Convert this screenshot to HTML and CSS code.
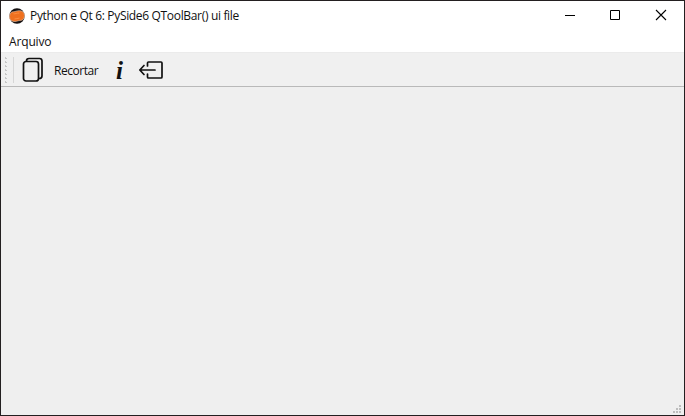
FILE: index.html
```html
<!DOCTYPE html>
<html lang="pt">
<head>
<meta charset="utf-8">
<title>Python e Qt 6: PySide6 QToolBar() ui file</title>
<link rel="stylesheet" href="styles.css">
</head>
<body>
<div class="window">
  <header class="titlebar">
    <svg class="app-icon" width="16" height="16" viewBox="0 0 16 16">
      <circle cx="8" cy="8" r="7.7" fill="#151112"/>
      <path d="M.5 8.800C.5 5.300 2.100 3.700 4.700 3.700c1.700 0 2.600-1 5.500-1 3.200 0 5.300 1.700 5.300 4.700 0 3.500-1.900 5.100-4.600 5.100-1.800 0-2.700 1-4.900 1C2.600 13.500.5 12.100.5 8.800z" fill="#ef701f" stroke="#e8c9b4" stroke-width=".6"/>
      <path d="M4.500 5.800c1.800.3 3.200-.9 5.800-.7M5.500 11c1.800.1 3-.9 5-.9" fill="none" stroke="#ff9448" stroke-width=".8"/>
    </svg>
    <span class="title">Python e Qt 6: PySide6 QToolBar() ui file</span>
    <div class="controls">
      <svg width="45" height="30" viewBox="0 0 45 30"><path d="M18 14.500h10" stroke="#000"/></svg>
      <svg width="45" height="30" viewBox="0 0 45 30"><path d="M18.500 9.500h9v9h-9z" fill="none" stroke="#000"/></svg>
      <svg width="45" height="30" viewBox="0 0 45 30"><path d="M19 9l10 10M29 9l-10 10" stroke="#000" stroke-width="1.100"/></svg>
    </div>
  </header>
  <nav class="menubar"><span class="menu">Arquivo</span></nav>
  <div class="toolbar">
    <svg class="handle" width="13" height="33" viewBox="0 0 13 33">
      <path d="M4.500 4v26" stroke="#c6c6c6" stroke-dasharray="2 2"/>
      <path d="M5.500 5v25" stroke="#c6c6c6" stroke-dasharray="1 3"/>
      <path d="M12.500 4v26" stroke="#d6d6d6"/>
    </svg>
    <svg class="copy" width="22" height="26" viewBox="0 0 22 26" fill="none" stroke="#111" stroke-width="1.700" stroke-linejoin="round">
      <rect x="1.500" y="4.500" width="15" height="19.500" rx="2.500"/>
      <path d="M4.500 4.200V3.900Q4.500 1.500 7 1.500h10.500Q20 1.500 20 4v15Q20 21.500 17 21.500"/>
    </svg>
    <span class="action">Recortar</span>
    <span class="info">i</span>
    <svg class="exit" width="26" height="22" viewBox="0 0 26 22" fill="none" stroke="#111" stroke-width="1.700" stroke-linecap="round" stroke-linejoin="round">
      <path d="M9.500 7V4Q9.500 3 10.500 3h12.500q1 0 1 1v14q0 1-1 1H10.500q-1 0-1-1v-3"/>
      <path d="M17 11H2M6 6.500L1.800 11 6 15.500"/>
    </svg>
  </div>
  <main class="content">
    <svg width="9" height="9" viewBox="0 0 9 9" fill="#bdbdbd"><path d="M6 0h2v2H6zM3 3h2v2H3zM6 3h2v2H6zM0 6h2v2H0zM3 6h2v2H3zM6 6h2v2H6z"/></svg>
  </main>
</div>
</body>
</html>
```
FILE: styles.css
```css
* { box-sizing: border-box; }
body { margin: 0; font: 12px/16px "Open Sans", "Noto Sans", sans-serif; color: #111; }
.window { height: 416px; border: 1px solid #231f20; display: flex; flex-direction: column; background: #efefef; }
.titlebar { height: 30px; background: #fff; display: flex; align-items: center; padding: 0 2px 0 8px; }
.app-icon { margin-right: 5px; }
.title { font-size: 12px; letter-spacing: -0.330px; white-space: nowrap; }
.controls { display: flex; margin-left: auto; }
.controls svg { display: block; }
.menubar { height: 21px; background: #fff; display: flex; align-items: center; padding-left: 8px; }
.menu { font-size: 12px; letter-spacing: -0.150px; }
.toolbar { height: 35px; border-top: 1px solid #ebebeb; border-bottom: 1px solid #b9b9b9; display: flex; align-items: center; background: #f0f0f0; }
.copy { margin-left: 8px; }
.action { margin-left: 10px; width: 46px; padding-top: 3px; font-size: 12px; letter-spacing: -0.450px; }
.info { width: 10px; margin-left: 16px; padding-top: 3px; font: italic bold 25px/28px "Liberation Serif", serif; }
.exit { margin-left: 12px; }
.content { flex: 1; display: flex; justify-content: flex-end; align-items: flex-end; padding: 0 2px 1px 0; }
```
